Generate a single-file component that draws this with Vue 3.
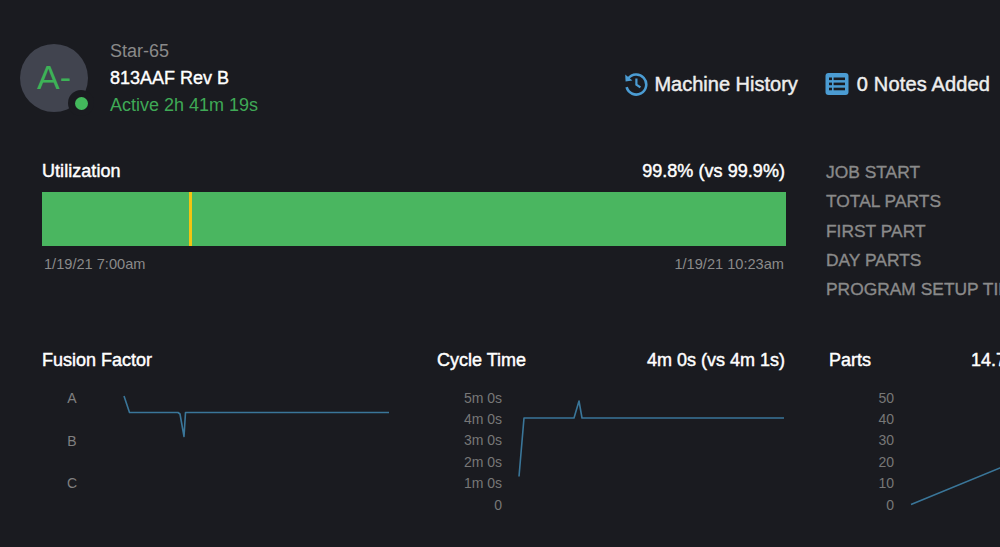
<script setup>
const details = ['JOB START', 'TOTAL PARTS', 'FIRST PART', 'DAY PARTS', 'PROGRAM SETUP TIME']
const charts = [
  {
    title: 'Fusion Factor', value: '', ticks: ['A', 'B', 'C'], labelClass: 'ticks-letter',
    points: '124,396 129.5,412.5 178,412.5 180,414 184,436.5 185.5,412.5 389,412.5'
  },
  {
    title: 'Cycle Time', value: '4m 0s (vs 4m 1s)', ticks: ['5m 0s', '4m 0s', '3m 0s', '2m 0s', '1m 0s', '0'], labelClass: 'ticks-num',
    points: '519,476.5 524,418 574,418 579,401 582,418 784,418'
  },
  {
    title: 'Parts', value: '14.7 (vs 14.7)', ticks: ['50', '40', '30', '20', '10', '0'], labelClass: 'ticks-num',
    points: '911,504.5 1000,468 1177,395'
  }
]
function viewBox(i) {
  const x = [42, 437, 829][i]
  return `${x} 385 348 130`
}
</script>

<template>
  <div class="page">
    <header class="header">
      <div class="machine">
        <div class="avatar">
          <span class="grade">A-</span>
          <span class="badge"><span class="dot"></span></span>
        </div>
        <div class="names">
          <div class="name">Star-65</div>
          <div class="job">813AAF Rev B</div>
          <div class="active">Active 2h 41m 19s</div>
        </div>
      </div>
      <div class="actions">
        <div class="action">
          <svg class="icon" width="24" height="24" viewBox="0 0 24 24" fill="none" stroke="#4b9cd3" stroke-width="2.6">
            <path d="M4.2 6.6A10 10 0 1 1 2.6 15.2" />
            <path d="M1.2 2.6 1.6 9.6 8.4 8.6Z" fill="#4b9cd3" stroke="none" />
            <path d="M12.4 6.6V12.6L16.4 15.4" stroke-width="2.2" />
          </svg>
          <span>Machine History</span>
        </div>
        <div class="action notes">
          <svg class="icon" width="24" height="24" viewBox="0 0 24 24">
            <rect x="0.5" y="1" width="23" height="22" rx="3" fill="#4b9cd3" />
            <g fill="#1a1b20">
              <rect x="4" y="5.5" width="3" height="2.6" />
              <rect x="8.6" y="5.5" width="11.4" height="2.6" />
              <rect x="4" y="10.6" width="3" height="2.6" />
              <rect x="8.6" y="10.6" width="11.4" height="2.6" />
              <rect x="4" y="15.7" width="3" height="2.6" />
              <rect x="8.6" y="15.7" width="11.4" height="2.6" />
            </g>
          </svg>
          <span>0 Notes Added</span>
        </div>
      </div>
    </header>

    <section class="middle">
      <div class="util">
        <div class="title-row util-title">
          <span>Utilization</span>
          <span>99.8% (vs 99.9%)</span>
        </div>
        <div class="bar"><span class="mark"></span></div>
        <div class="times">
          <span>1/19/21 7:00am</span>
          <span>1/19/21 10:23am</span>
        </div>
      </div>
      <ul class="details">
        <li v-for="d in details" :key="d">{{ d }}</li>
      </ul>
    </section>

    <section class="charts">
      <div v-for="(c, i) in charts" :key="c.title" class="chart">
        <div class="title-row chart-title">
          <span>{{ c.title }}</span>
          <span>{{ c.value }}</span>
        </div>
        <div class="plot">
          <div class="ticks" :class="c.labelClass">
            <span v-for="t in c.ticks" :key="t">{{ t }}</span>
          </div>
          <svg class="line" width="348" height="130" :viewBox="viewBox(i)">
            <polyline :points="c.points" fill="none" stroke="#3a7699" stroke-width="1.6" stroke-linejoin="round" />
          </svg>
        </div>
      </div>
    </section>
  </div>
</template>

<style>
html, body { margin: 0; background: #1a1b20; overflow: hidden; }
</style>

<style scoped>
.page {
  width: 1000px;
  height: 547px;
  overflow: hidden;
  background: #1a1b20;
  font-family: "Liberation Sans", Arial, sans-serif;
  box-sizing: border-box;
  padding-top: 41px;
  color: #fff;
}
.header {
  display: flex;
  justify-content: space-between;
  align-items: center;
  padding: 0 10px 0 20px;
  height: 74px;
}
.machine { display: flex; align-items: center; gap: 22px; }
.avatar {
  position: relative;
  width: 68px;
  height: 68px;
  border-radius: 50%;
  background: #41444f;
  color: #3db257;
  font-size: 34px;
  display: flex;
  align-items: center;
  justify-content: center;
}
.grade { margin-top: -2px; }
.badge {
  position: absolute;
  right: -6px;
  bottom: -4px;
  width: 26px;
  height: 26px;
  border-radius: 50%;
  background: #1a1b20;
  display: flex;
  align-items: center;
  justify-content: center;
}
.dot { width: 13px; height: 13px; border-radius: 50%; background: #43b95c; }
.names { font-size: 18px; line-height: 27px; }
.name { color: #8a8a8a; }
.job { -webkit-text-stroke: 0.4px #fff; }
.active { color: #3fa956; }
.actions { display: flex; gap: 27px; margin-top: 12px; }
.action {
  display: flex;
  align-items: center;
  gap: 6px;
  font-size: 20px;
  color: #eeeeee;
  -webkit-text-stroke: 0.45px #eeeeee;
}
.notes { gap: 8px; letter-spacing: 0.15px; }
.middle {
  display: flex;
  margin-top: 44px;
  padding-left: 42px;
  gap: 40px;
  height: 165px;
}
.util { width: 744px; flex: none; }
.title-row {
  display: flex;
  justify-content: space-between;
  font-size: 18px;
  line-height: 24px;
  height: 24px;
  -webkit-text-stroke: 0.45px #fff;
}
.util-title { padding-right: 1px; letter-spacing: 0.05px; }
.bar {
  position: relative;
  margin-top: 9px;
  height: 54px;
  background: #4ab660;
}
.mark {
  position: absolute;
  left: 146.5px;
  top: 0;
  bottom: 0;
  width: 3px;
  background: #f2c511;
}
.times {
  display: flex;
  justify-content: space-between;
  margin-top: 10px;
  padding: 0 2px;
  font-size: 14.6px;
  line-height: 16px;
  color: #8a8a8a;
}
.details {
  list-style: none;
  margin: 0;
  margin-top: -1px;
  padding: 0;
  font-size: 17.4px;
  line-height: 29.3px;
  color: #8a8a8a;
  white-space: nowrap;
  -webkit-text-stroke: 0.35px #8a8a8a;
}
.charts {
  display: flex;
  gap: 47px;
  margin-left: 42px;
  margin-top: 24px;
  width: 1140px;
}
.chart { width: 348px; flex: none; }
.chart:nth-child(3) { margin-left: -3px; }
.chart:nth-child(3) .chart-title { padding-right: 96px; }
.plot { position: relative; height: 130px; margin-top: 13px; }
.line { display: block; }
.ticks {
  position: absolute;
  top: 2.5px;
  display: flex;
  flex-direction: column;
  align-items: flex-end;
  font-size: 14px;
  line-height: 21.4px;
  color: #777777;
  white-space: nowrap;
}
.ticks-num { left: 0; width: 65px; }
.ticks-letter { left: 25px; line-height: 42.6px; top: -8px; align-items: center; width: 10px; color: #808080; }
</style>
